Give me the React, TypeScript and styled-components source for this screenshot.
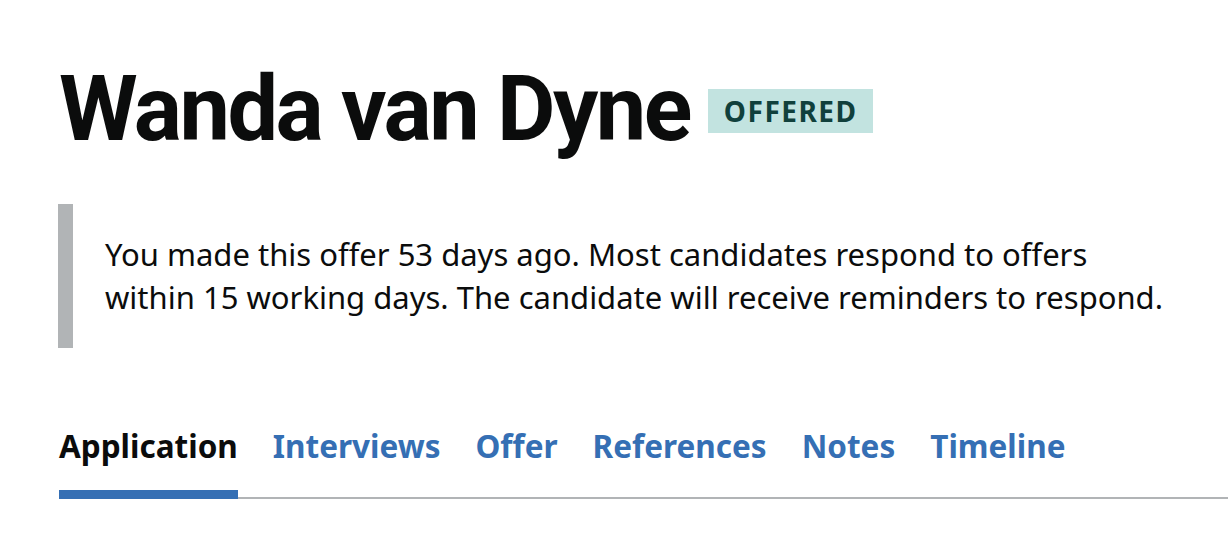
import React from "react";
import styled, { createGlobalStyle } from "styled-components";

const Global = createGlobalStyle`
  html, body { margin: 0; padding: 0; background: #ffffff; }
  body { font-family: "Noto Sans", "Liberation Sans", sans-serif; color: #0b0c0c; }
`;

const Page = styled.main`
  padding: 60px 0 0 59px;
  width: 1228px;
  box-sizing: border-box;
  overflow: hidden;
`;

const TitleRow = styled.div`
  display: flex;
  align-items: flex-start;
  gap: 18px;
`;

const Heading = styled.h1`
  margin: 0;
  font-family: Roboto, "Noto Sans", sans-serif;
  font-size: 90px;
  line-height: 100px;
  font-weight: 700;
  letter-spacing: -2.5px;
  color: #0b0c0c;
`;

const Tag = styled.strong`
  margin-top: 29px;
  display: inline-block;
  background: #c2e3e0;
  color: #10403c;
  font-size: 28px;
  line-height: 44px;
  font-weight: 700;
  letter-spacing: 1.5px;
  padding: 0 16px;
  text-transform: uppercase;
`;

const Inset = styled.div`
  margin-top: 44px;
  margin-left: -1px;
  border-left: 15px solid #b1b4b6;
  padding: 29px 0 29px 32px;
  width: 1112px;
  box-sizing: border-box;
`;

const InsetText = styled.p`
  margin: 0;
  font-size: 31px;
  line-height: 43px;
  color: #0b0c0c;
`;

const TabList = styled.nav`
  margin-top: 78px;
  display: flex;
  gap: 35px;
  border-bottom: 2px solid #b1b4b6;
`;

const Tab = styled.a<{ $active?: boolean }>`
  display: block;
  font-size: 31.5px;
  line-height: 40px;
  font-weight: 700;
  padding-bottom: 24px;
  margin-bottom: -2px;
  text-decoration: none;
  color: ${(p) => (p.$active ? "#0b0c0c" : "#356fb4")};
  border-bottom: 9px solid ${(p) => (p.$active ? "#356fb4" : "transparent")};
`;

const tabs = ["Application", "Interviews", "Offer", "References", "Notes", "Timeline"];

export default function App() {
  return (
    <>
      <Global />
      <Page>
        <TitleRow>
          <Heading>Wanda van Dyne</Heading>
          <Tag>Offered</Tag>
        </TitleRow>
        <Inset>
          <InsetText>
            You made this offer 53 days ago. Most candidates respond to offers within 15 working days. The candidate will receive reminders to respond.
          </InsetText>
        </Inset>
        <TabList>
          {tabs.map((t, i) => (
            <Tab key={t} href="#" $active={i === 0}>
              {t}
            </Tab>
          ))}
        </TabList>
      </Page>
    </>
  );
}
